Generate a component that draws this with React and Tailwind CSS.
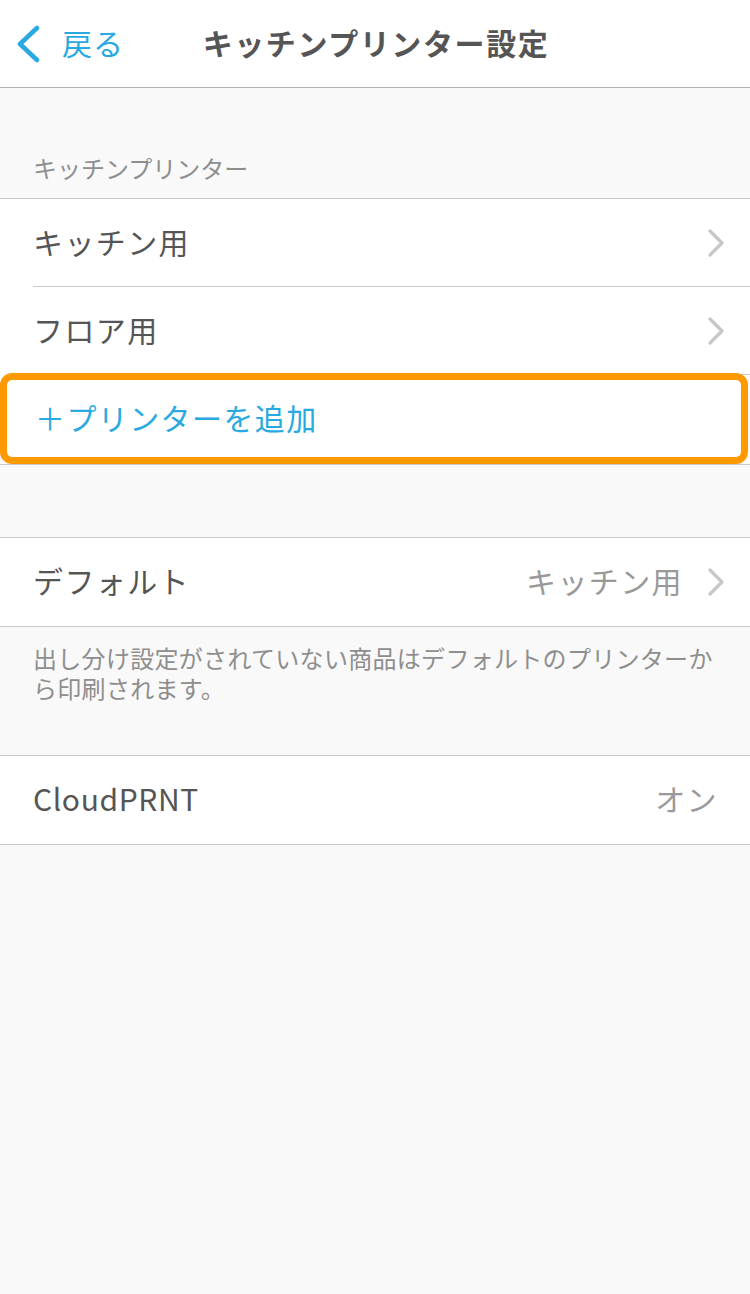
import { useState } from 'react';

const font = { fontFamily: '"Noto Sans CJK JP", "Noto Sans", sans-serif' };

function Chevron() {
    return (
        <svg width="18" height="28" viewBox="0 0 18 28" className="shrink-0">
            <path d="M3 2 L15 14 L3 26" fill="none" stroke="#c7c7c7" strokeWidth="3.2" strokeLinecap="round" strokeLinejoin="round" />
        </svg>
    );
}

function Row({ label, value, chevron = true, inset = false, latin = false }) {
    return (
        <div className="relative flex h-[88px] items-center bg-white pl-[33px] pr-[25px]">
            <span
                className={
                    latin
                        ? 'flex-1 -translate-y-[2px] text-[30px] tracking-[0.6px] text-[#555]'
                        : 'flex-1 -translate-y-[2px] text-[30px] tracking-[1.4px] text-[#555]'
                }
            >
                {label}
            </span>
            {value && (
                <span
                    className={
                        chevron
                            ? 'mr-[24px] -translate-y-[2px] text-[30px] tracking-[1.4px] text-[#999]'
                            : 'mr-[7px] -translate-y-[2px] text-[30px] tracking-[1.4px] text-[#999]'
                    }
                >
                    {value}
                </span>
            )}
            {chevron && <Chevron />}
            {inset && <div className="absolute bottom-0 left-[33px] right-0 h-px bg-[#c8c8c8]" />}
        </div>
    );
}

export default function App() {
    const [printers] = useState(['キッチン用', 'フロア用']);

    return (
        <div className="min-h-[1294px] bg-[#f9f9f9]" style={font}>
            <div className="grid h-[88px] grid-cols-[1fr_auto_1fr] items-center border-b border-[#b4b4b4] bg-white">
                <div className="flex items-center pl-[17px]">
                    <svg width="24" height="40" viewBox="0 0 24 40" className="shrink-0">
                        <path d="M20 4 L3 20 L20 36" fill="none" stroke="#29a9e1" strokeWidth="4.5" strokeLinecap="round" strokeLinejoin="round" />
                    </svg>
                    <span className="ml-[21px] -translate-y-[1px] text-[30px] tracking-[1px] text-[#29a9e1]">戻る</span>
                </div>
                <h1 className="-translate-y-[1px] pl-[2px] text-[30px] font-bold tracking-[1.6px] text-[#555]">
                    キッチンプリンター設定
                </h1>
                <div />
            </div>

            <div className="flex h-[110px] items-end pb-[15px] pl-[33px] text-[24px] leading-[30px] text-[#8e8e8e]">
                キッチンプリンター
            </div>

            <div className="border-y border-[#c8c8c8]">
                {printers.map((p) => (
                    <Row key={p} label={p} inset />
                ))}
                <div className="relative flex h-[89px] items-center bg-white pl-[35px]">
                    <span className="-translate-y-[2px] text-[30px] tracking-[1.4px] text-[#29a9e1]">＋プリンターを追加</span>
                    <div className="absolute -top-[2px] bottom-0 left-0 right-[2px] rounded-[12px] border-[7px] border-[#ff9900]" />
                </div>
            </div>

            <div className="h-[72px]" />

            <div className="border-y border-[#c8c8c8]">
                <Row label="デフォルト" value="キッチン用" />
            </div>

            <div className="pb-[52px] pl-[33px] pr-[30px] pt-[16px] text-[24px] leading-[30px] tracking-[0.3px] text-[#8e8e8e]">
                出し分け設定がされていない商品はデフォルトのプリンターから印刷されます。
            </div>

            <div className="border-y border-[#c8c8c8]">
                <Row label="CloudPRNT" value="オン" chevron={false} latin />
            </div>
        </div>
    );
}
